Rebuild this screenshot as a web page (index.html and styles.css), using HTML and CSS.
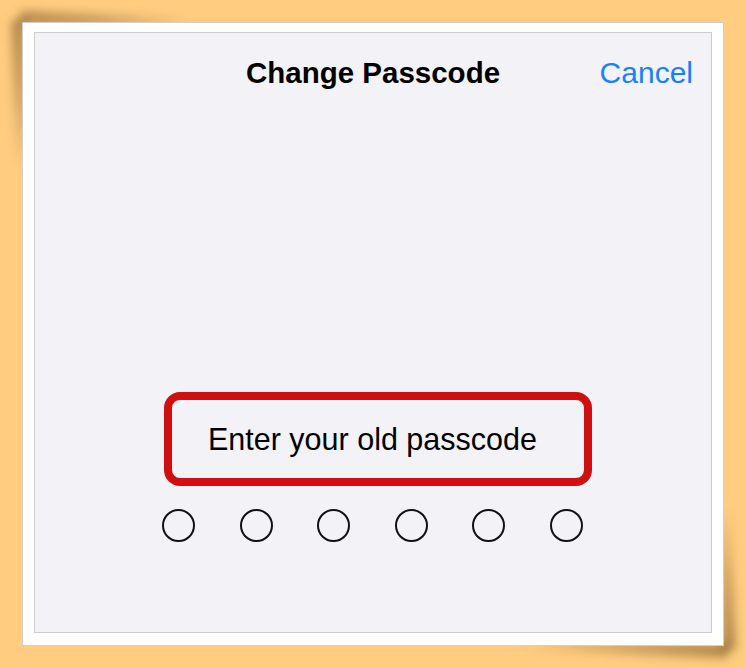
FILE: index.html
```html
<!DOCTYPE html>
<html lang="en">
<head>
    <meta charset="UTF-8">
    <meta name="viewport" content="width=device-width, initial-scale=1.0">
    <title>Change Passcode</title>
    <link rel="stylesheet" href="styles.css">
</head>
<body>
    <div class="frame">
        <div class="screen">
            <div class="navbar">
                <span></span>
                <span class="title">Change Passcode</span>
                <span class="cancel">Cancel</span>
            </div>
            <div class="prompt-row">
                <div class="prompt">Enter your old passcode</div>
            </div>
            <div class="dots">
                <span class="dot"></span>
                <span class="dot"></span>
                <span class="dot"></span>
                <span class="dot"></span>
                <span class="dot"></span>
                <span class="dot"></span>
            </div>
        </div>
    </div>
</body>
</html>
```

FILE: styles.css
```css
body {
    margin: 0;
    background-color: #ffcc80;
    font-family: 'Liberation Sans', Arial, sans-serif;
    height: 668px;
    overflow: hidden;
}
.frame {
    position: relative;
    box-sizing: border-box;
    width: 702px;
    height: 624px;
    margin: 22px;
    padding: 9px 11px 12px 11px;
    background: #fff;
    border: 1px solid #cfcfcf;
    display: flex;
}
/* curled paper shadows, one strip per edge */
.frame::before,
.frame::after,
.screen::before,
.screen::after {
    content: "";
    position: absolute;
    z-index: -1;
    filter: blur(5px);
}
.frame::before {
    top: -12px;
    left: -3px;
    width: 170px;
    height: 14px;
    background: linear-gradient(to right, rgba(70, 40, 0, 0.4), rgba(70, 40, 0, 0.28) 40%, rgba(70, 40, 0, 0));
    transform-origin: left center;
    transform: rotate(2deg);
}
.frame::after {
    top: -3px;
    left: -12px;
    width: 14px;
    height: 150px;
    background: linear-gradient(to bottom, rgba(70, 40, 0, 0.4), rgba(70, 40, 0, 0.28) 40%, rgba(70, 40, 0, 0));
    transform-origin: center top;
    transform: rotate(-2deg);
}
.screen::before {
    bottom: -13px;
    right: -5px;
    width: 205px;
    height: 14px;
    background: linear-gradient(to left, rgba(70, 40, 0, 0.42), rgba(70, 40, 0, 0.25) 45%, rgba(70, 40, 0, 0));
    transform-origin: right center;
    transform: rotate(2deg);
}
.screen::after {
    bottom: -5px;
    right: -13px;
    width: 14px;
    height: 140px;
    background: linear-gradient(to top, rgba(70, 40, 0, 0.42), rgba(70, 40, 0, 0.25) 45%, rgba(70, 40, 0, 0));
    transform-origin: center bottom;
    transform: rotate(-2deg);
}
.screen {
    flex: 1;
    background: #f2f2f7;
    border: 1px solid #cccccc;
    display: flex;
    flex-direction: column;
}
.navbar {
    display: grid;
    grid-template-columns: 1fr auto 1fr;
    align-items: center;
    padding: 23px 18px 0 18px;
    line-height: 34px;
}
.title {
    font-weight: bold;
    font-size: 29.5px;
    color: #000;
}
.cancel {
    justify-self: end;
    font-size: 30px;
    color: #1a7ffb;
}
.prompt-row {
    display: flex;
    justify-content: center;
    margin-top: 302px;
}
.prompt {
    margin-left: 10px;
    box-sizing: border-box;
    width: 428px;
    height: 94px;
    border: 8px solid #cf1010;
    border-radius: 16px;
    padding: 0 46px 0 36px;
    display: flex;
    align-items: center;
    font-size: 30.5px;
    color: #000;
    white-space: nowrap;
}
.dots {
    display: flex;
    justify-content: center;
    gap: 44.5px;
    margin-top: 23px;
    padding-right: 1px;
}
.dot {
    box-sizing: border-box;
    width: 33px;
    height: 33px;
    border: 2px solid #111;
    border-radius: 50%;
}
```
